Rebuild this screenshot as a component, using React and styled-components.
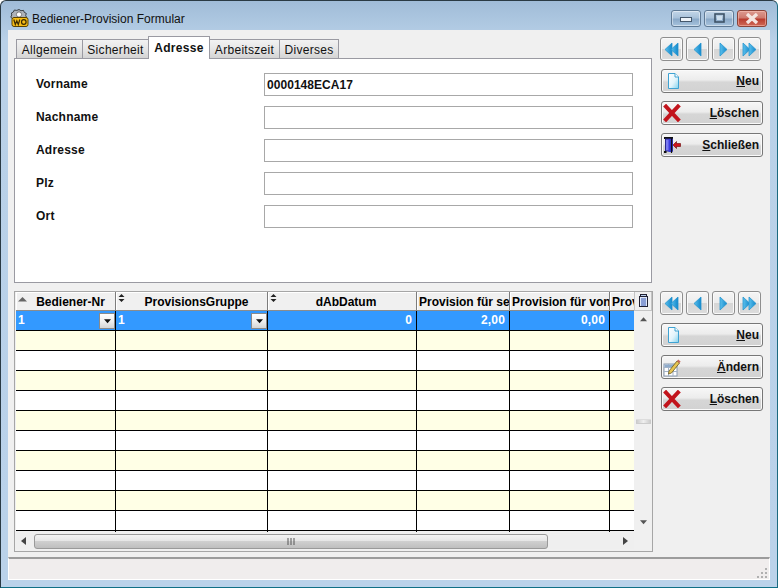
import React from "react";
import styled, { createGlobalStyle } from "styled-components";

const Global = createGlobalStyle`
  html, body { margin: 0; padding: 0; background: #fff; }
  body { width: 778px; height: 588px; overflow: hidden; font-family: "Liberation Sans", Arial, sans-serif; }
  * { box-sizing: border-box; }
`;

const Win = styled.div`
  position: relative;
  width: 778px; height: 588px;
  display: flex; flex-direction: column;
  border: 1px solid #2a3a44;
  border-right-color: #1b6a80;
  border-bottom-color: #0f6f86;
  border-radius: 6px 6px 0 0;
  background: linear-gradient(180deg, #a0bcd8 0, #b9d1e8 40px, #bad2ea 100%);
  padding: 0 7px 7px 7px;
`;
const TitleBar = styled.div`
  height: 29px; flex: none;
  display: flex; align-items: center;
  padding-top: 4px;
`;
const Title = styled.span`
  margin-left: 3px; font-size: 12px; color: #111;
  padding-top: 2px;
`;
const Caption = styled.div`
  margin-left: auto; margin-right: 3px; margin-top: 1px;
  display: flex; gap: 3px;
`;
const CapBtn = styled.div`
  width: ${p => p.$w}px; height: 17px;
  border: 1px solid ${p => p.$red ? "#8a4338" : "#5f7a95"};
  border-radius: 3px;
  display: flex; align-items: center; justify-content: center;
  box-shadow: inset 0 0 0 1px ${p => p.$red ? "rgba(255,200,190,.5)" : "rgba(255,255,255,.45)"};
  background: ${p => p.$red
    ? "linear-gradient(180deg,#dc9a90 0,#cf7a6f 45%,#b93c2f 55%,#cf6a58 100%)"
    : "linear-gradient(180deg,#c3d6e8 0,#a9c2da 45%,#8aa9c8 55%,#a7c3dd 100%)"};
`;
const Client = styled.div`
  flex: 1; min-height: 0;
  display: flex; flex-direction: column;
  background: #f0f0f0;
`;
const Body = styled.div`
  flex: 1; min-height: 0;
  display: flex;
  padding: 8px 0 0 6px;
`;
const LeftCol = styled.div`
  width: 639px; flex: none;
  display: flex; flex-direction: column;
`;
const RightCol = styled.div`
  flex: 1; padding: 0 0 0 7px; margin-top: -1px;
  display: flex; flex-direction: column;
`;
const TabRow = styled.div`
  height: 21px; flex: none;
  display: flex; align-items: flex-end;
  padding-left: 3px;
  position: relative; z-index: 1;
  margin-bottom: -1px;
`;
const Tab = styled.div`
  height: ${p => p.$active ? 23 : 20}px;
  width: ${p => p.$w}px;
  flex: none;
  margin-left: -1px;
  position: relative; z-index: ${p => p.$active ? 1 : 0};
  border: 1px solid #9a9aa2;
  border-bottom: ${p => p.$active ? "0" : "1px solid #9a9aa2"};
  background: ${p => p.$active ? "#fff" : "linear-gradient(180deg,#f2f2f2 0,#e6e6e6 50%,#d4d4d4 100%)"};
  font-size: 12px; letter-spacing: .3px;
  font-weight: ${p => p.$active ? 700 : 400};
  color: #111;
  display: flex; align-items: center; justify-content: center;
  padding-top: ${p => p.$active ? 0 : 1}px;
`;
const TabPanel = styled.div`
  height: 225px; flex: none;
  width: 638px;
  border: 1px solid #9a9aa2;
  background: #fff;
  padding: 14px 18px 0 21px;
  display: flex; flex-direction: column; gap: 10px;
`;
const FormRow = styled.div`
  height: 23px; display: flex; align-items: flex-start;
`;
const Label = styled.label`
  width: 228px; font-size: 12px; font-weight: 700; color: #111; letter-spacing: .2px;
  padding-top: 4px; line-height: 14px;
`;
const Field = styled.div`
  width: 369px; height: 23px;
  border: 1px solid #a8a8a8;
  background: #fff;
  font-size: 12px; font-weight: 700; color: #111; letter-spacing: .05px;
  padding: 4px 0 0 2px; line-height: 14px;
`;
const GridBox = styled.div`
  margin-top: 8px;
  width: 639px; height: 261px; flex: none;
  border: 1px solid #a6a6a6;
  padding: 0 0 2px 1px;
  display: flex; flex-direction: column;
`;
const GridTop = styled.div`
  flex: none; height: 240px; display: flex; position: relative;
`;
const GridTable = styled.div`
  width: 618px; flex: none; overflow: hidden;
`;
const Row = styled.div`
  display: grid;
  grid-template-columns: 100px 152px 149px 93px 100px 60px;
  height: ${p => p.$h}px;
  background: ${p => p.$bg};
  border-bottom: ${p => p.$head ? "0" : "1px solid #000"};
  color: ${p => p.$sel ? "#fff" : "#000"};
`;
const HeadCell = styled.div`
  position: relative;
  background: #f0f0f0;
  border-right: 1px solid #7c7c7c;
  border-bottom: 1px solid #8c8c8c;
  box-shadow: inset 1px 1px 0 #fff;
  font-size: 12px; font-weight: 700;
  white-space: nowrap; overflow: hidden;
  text-align: ${p => p.$left ? "left" : "center"};
  padding-left: ${p => p.$pad}px;
  line-height: 20px;
`;
const SortMark = styled.svg`
  position: absolute; left: 2px; top: ${p => p.$t}px;
`;
const Cell = styled.div`
  position: relative;
  border-right: 1px solid #000;
  margin-bottom: ${p => p.$last ? -2 : 0}px;
  font-size: 12px; font-weight: 700;
  letter-spacing: .15px;
  line-height: 19px;
  text-align: ${p => p.$right ? "right" : "left"};
  padding: ${p => p.$right ? "0 4px 0 0" : "0 0 0 2px"};
`;
const DropBtn = styled.div`
  position: absolute; right: 0; top: 2px;
  width: 16px; height: 16px;
  border: 1px solid #8a8a8a;
  background: linear-gradient(180deg,#fff 0,#f0f0f0 50%,#d5d5d5 100%);
  display: flex; align-items: center; justify-content: center;
`;
const ColPicker = styled.div`
  position: absolute; left: 618px; top: 0; width: 18px; height: 19px;
  background: #f0f0f0; border: 1px solid #c4c4c4; border-top: 0;
  display: flex; align-items: center; justify-content: center;
`;
const VScroll = styled.div`
  width: 18px; flex: none; margin-top: 19px;
  background: #f0f0f0;
  display: flex; flex-direction: column; align-items: center; justify-content: space-between;
  padding: 6px 0 7px;
`;
const VGrip = styled.div`
  width: 15px; height: 5px;
  background: linear-gradient(90deg,#c8c8c8,#efefef 50%,#c8c8c8);
  border-top: 1px solid #ddd; border-bottom: 1px solid #ccc;
`;
const HScroll = styled.div`
  flex: none; height: 16px; margin-top: 1px; width: 618px;
  display: flex; align-items: center;
  background: #efefef;
`;
const Thumb = styled.div`
  width: 514px; height: 15px;
  border: 1px solid #9a9a9a; border-radius: 3px;
  background: linear-gradient(180deg,#f3f3f3 0,#e6e6e6 45%,#cfcfcf 50%,#bfbfbf 100%);
  display: flex; align-items: center; justify-content: center;
`;
const ArrowBox = styled.div`
  width: 18px; flex: none; display: flex; align-items: center; justify-content: center;
  padding-right: ${p => p.$pr}px;
`;
const Spacer = styled.div`flex: 1;`;
const NavRow = styled.div`
  display: flex; gap: 3px; height: 24px; flex: none;
  margin-top: ${p => p.$mt}px;
`;
const NavBtn = styled.div`
  width: 23px; height: 24px;
  border: 1px solid #8e8e8e; border-radius: 3px;
  box-shadow: inset 0 0 0 1px #fafafa;
  background: linear-gradient(180deg,#f5f5f5 0,#ececec 50%,#d6d6d6 52%,#dcdcdc 100%);
  display: flex; align-items: center; justify-content: center;
`;
const ActionBtn = styled.div`
  margin-top: ${p => p.$mt}px; margin-left: 1px;
  width: 102px; height: 24px; flex: none;
  border: 1px solid #777; border-radius: 3px;
  box-shadow: inset 0 0 0 1px #fafafa;
  background: linear-gradient(180deg,#f7f7f7 0,#ececec 45%,#d6d6d6 55%,#d2d2d2 100%);
  display: flex; align-items: center;
  padding: 0 3px 0 1px;
  font-size: 12px; font-weight: 700; color: #111;
`;
const BtnText = styled.span`
  margin-left: auto;
  u { text-decoration: underline; }
`;
const StatusBar = styled.div`
  flex: none; height: 23px; margin-top: 6px; position: relative;
  background: #f0eded;
  border-top: 2px solid #9c9c9c;
  box-shadow: inset 0 -1px 0 #fff;
  border-right: 1px solid #fff; border-left: 1px solid #fff;
`;
const Grip = styled.svg`
  position: absolute; right: 1px; bottom: 1px;
`;

const Doc = () => (
  <svg width="17" height="18" viewBox="0 0 17 18" style={{ marginLeft: 2 }}>
    <defs><linearGradient id="dg" x1="0" y1="0" x2="1" y2="1"><stop offset="0" stopColor="#fff"/><stop offset=".55" stopColor="#e2f4fb"/><stop offset="1" stopColor="#7fd2ee"/></linearGradient></defs>
    <path d="M3.5 1.5H10L13.5 5V16.5H3.5Z" fill="url(#dg)" stroke="#3fa2d2"/>
    <path d="M10 1.5V5H13.5" fill="#fff" stroke="#3fa2d2"/>
  </svg>
);
const Cross = () => (
  <svg width="18" height="18" viewBox="0 0 18 18">
    <path d="M3 2.5L15 15.5M15 2.5L3 15.5" stroke="#c2141c" strokeWidth="4" strokeLinecap="square"/>
  </svg>
);
const Exit = () => (
  <svg width="19" height="18" viewBox="0 0 19 18">
    <rect x="1" y="1" width="9" height="2" fill="#111"/>
    <rect x="2.5" y="3" width="7" height="12" fill="#7a7af0" stroke="#28288c"/>
    <rect x="5.5" y="3" width="4" height="13" fill="#3a3ae0"/>
    <rect x="1" y="15" width="2.5" height="2" fill="#111"/>
    <path d="M8.5 1.5V17" stroke="#111" strokeWidth="1.2"/>
    <path d="M10 9L13.5 5.5V7.5H17.5V10.5H13.5V12.5Z" fill="#d0141c" stroke="#600" strokeWidth=".6"/>
  </svg>
);
const Edit = () => (
  <svg width="18" height="19" viewBox="0 0 18 19">
    <rect x="1" y="6" width="13" height="12" fill="#fff" stroke="#8b9bb0"/>
    <path d="M1 9.5H14M1 13.5H14M5.5 6V18M10 6V18" stroke="#a3b3c8"/>
    <rect x="1.5" y="6.5" width="12" height="2.5" fill="#8faccc"/>
    <path d="M6 13L14 3L16.5 5L8.5 15L5.5 16Z" fill="#e8c552" stroke="#6c5a20" strokeWidth=".8"/>
    <path d="M14 3L15.2 1.6L17.6 3.6L16.5 5Z" fill="#c8675a"/>
  </svg>
);

const NavIcon = ({ dir, dbl }) => {
  const t = dir === "l"
    ? (x) => `M${x + 7} 4V17L${x} 10.5Z`
    : (x) => `M${x} 4V17L${x + 7} 10.5Z`;
  return (
    <svg width="17" height="21" viewBox="0 0 17 21">
      <defs><linearGradient id="na" x1="0" y1="0" x2="1" y2="0"><stop offset="0" stopColor="#5cc0ec"/><stop offset="1" stopColor="#1288cc"/></linearGradient></defs>
      {dbl ? (
        <>
          <path d={t(2)} fill="url(#na)" stroke="#2795cf" strokeWidth=".8"/>
          <path d={t(8)} fill="url(#na)" stroke="#2795cf" strokeWidth=".8"/>
        </>
      ) : <path d={t(5)} fill="url(#na)" stroke="#2795cf" strokeWidth=".8"/>}
    </svg>
  );
};
const Nav = ({ mt }) => (
  <NavRow $mt={mt}>
    <NavBtn><NavIcon dir="l" dbl /></NavBtn>
    <NavBtn><NavIcon dir="l" /></NavBtn>
    <NavBtn><NavIcon dir="r" /></NavBtn>
    <NavBtn><NavIcon dir="r" dbl /></NavBtn>
  </NavRow>
);
const Sort = () => (
  <SortMark $t={2} width="7" height="9" viewBox="0 0 7 9">
    <path d="M3.5 0L6.5 3H.5ZM3.5 8L.5 5H6.5Z" fill="#222"/>
  </SortMark>
);
const Tri = ({ d = "d", w = 7, c = "#555" }) => (
  <svg width={w} height="5" viewBox="0 0 8 5">
    <path d={d === "d" ? "M0 0H8L4 4.5Z" : "M4 0L8 4.5H0Z"} fill={c}/>
  </svg>
);

const fields = [["Vorname", "0000148ECA17"], ["Nachname", ""], ["Adresse", ""], ["Plz", ""], ["Ort", ""]];
const tabs = [["Allgemein", 67], ["Sicherheit", 67], ["Adresse", 62, true], ["Arbeitszeit", 71], ["Diverses", 60]];

export default function App() {
  return (
    <>
      <Global />
      <Win>
        <TitleBar>
          <svg width="20" height="20" viewBox="0 0 20 20" style={{ marginLeft: 1 }}>
            <path d="M10 1.5l2 1.2 2.5-.3.8 2 2 1-.6 2.2 1 2-1.8 1.4H3.6L1.8 9l1-2L2.4 5l2-1 .9-2 2.5.4z" fill="#aeb3ba" stroke="#2f343a" strokeWidth=".9"/>
            <circle cx="10" cy="6.5" r="2.6" fill="#fff" stroke="#555" strokeWidth=".7"/>
            <rect x="3" y="9.5" width="16" height="9" rx="2" fill="#f6bd16" stroke="#5a4300"/>
            <path d="M4.8 11.5l1.5 5 1.5-3.6 1.5 3.6 1.5-5" fill="none" stroke="#3a2a00" strokeWidth="1.2"/>
            <circle cx="14.8" cy="14" r="2.3" fill="none" stroke="#3a2a00" strokeWidth="1.2"/>
          </svg>
          <Title>Bediener-Provision Formular</Title>
          <Caption>
            <CapBtn $w={30}>
              <svg width="14" height="6" viewBox="0 0 14 6" style={{ marginTop: 3 }}><rect x="1.5" y=".5" width="11" height="4" fill="#eef3f8" stroke="#45586c"/></svg>
            </CapBtn>
            <CapBtn $w={30}>
              <svg width="11" height="10" viewBox="0 0 11 10"><rect x="1" y="1" width="9" height="8" fill="none" stroke="#3e5367" strokeWidth="1.6"/><rect x="3" y="3" width="5" height="4" fill="#cfe0ee"/></svg>
            </CapBtn>
            <CapBtn $w={30} $red>
              <svg width="14" height="11" viewBox="0 0 14 11"><path d="M2 1l10 9M12 1L2 10" stroke="#f4e4e0" strokeWidth="3.4"/></svg>
            </CapBtn>
          </Caption>
        </TitleBar>
        <Client>
          <Body>
            <LeftCol>
              <TabRow>
                {tabs.map(([t, w, a]) => <Tab key={t} $w={w} $active={a}>{t}</Tab>)}
              </TabRow>
              <TabPanel>
                {fields.map(([l, v]) => (
                  <FormRow key={l}><Label>{l}</Label><Field>{v}</Field></FormRow>
                ))}
              </TabPanel>
              <GridBox>
                <GridTop>
                  <GridTable>
                    <Row $h={19} $head $bg="#f0f0f0">
                      <HeadCell $pad={10}><SortMark $t={5} width="9" height="5" viewBox="0 0 9 5"><path d="M4.5 0L9 4.5H0Z" fill="#666"/></SortMark>Bediener-Nr</HeadCell>
                      <HeadCell $pad={10}><Sort />ProvisionsGruppe</HeadCell>
                      <HeadCell $pad={8}><Sort />dAbDatum</HeadCell>
                      <HeadCell $left $pad={2}>Provision für se</HeadCell>
                      <HeadCell $left $pad={2}>Provision für von</HeadCell>
                      <HeadCell $left $pad={2}>Prov</HeadCell>
                    </Row>
                    <Row $h={20} $sel $bg="#3399ff">
                      <Cell>1<DropBtn><Tri c="#111" /></DropBtn></Cell>
                      <Cell>1<DropBtn><Tri c="#111" /></DropBtn></Cell>
                      <Cell $right>0</Cell>
                      <Cell $right>2,00</Cell>
                      <Cell $right>0,00</Cell>
                      <Cell />
                    </Row>
                    {Array.from({ length: 10 }).map((_, i) => (
                      <Row key={i} $h={20} $bg={i % 2 === 0 ? "#ffffe6" : "#fff"}>
                        {Array.from({ length: 6 }).map((_, j) => <Cell key={j} $last={i === 9} />)}
                      </Row>
                    ))}
                  </GridTable>
                  <ColPicker>
                    <svg width="11" height="14" viewBox="0 0 11 14">
                      <rect x="2.5" y=".5" width="6" height="2" fill="#bcd0ee" stroke="#223"/>
                      <rect x="1.5" y="2.5" width="8" height="10" fill="#dfe8fa" stroke="#223"/>
                      <path d="M3 5H8M3 7H8M3 9H8M3 11H8" stroke="#3757b0"/>
                    </svg>
                  </ColPicker>
                  <VScroll>
                    <Tri d="u" />
                    <VGrip />
                    <Tri d="d" />
                  </VScroll>
                </GridTop>
                <HScroll>
                  <ArrowBox $pr={3}>
                    <svg width="5" height="8" viewBox="0 0 5 8"><path d="M5 0V8L0 4Z" fill="#444"/></svg>
                  </ArrowBox>
                  <Thumb>
                    <svg width="9" height="7" viewBox="0 0 9 7"><path d="M1 0V7M4 0V7M7 0V7" stroke="#555"/></svg>
                  </Thumb>
                  <Spacer />
                  <ArrowBox $pr={0}>
                    <svg width="5" height="8" viewBox="0 0 5 8"><path d="M0 0V8L5 4Z" fill="#444"/></svg>
                  </ArrowBox>
                </HScroll>
              </GridBox>
            </LeftCol>
            <RightCol>
              <Nav mt={0} />
              <ActionBtn $mt={8}><Doc /><BtnText><u>N</u>eu</BtnText></ActionBtn>
              <ActionBtn $mt={8}><Cross /><BtnText><u>L</u>öschen</BtnText></ActionBtn>
              <ActionBtn $mt={8}><Exit /><BtnText><u>S</u>chließen</BtnText></ActionBtn>
              <Nav mt={134} />
              <ActionBtn $mt={8}><Doc /><BtnText><u>N</u>eu</BtnText></ActionBtn>
              <ActionBtn $mt={8}><Edit /><BtnText><u>Ä</u>ndern</BtnText></ActionBtn>
              <ActionBtn $mt={8}><Cross /><BtnText><u>L</u>öschen</BtnText></ActionBtn>
            </RightCol>
          </Body>
          <StatusBar>
            <Grip width="12" height="12" viewBox="0 0 12 12">
              <path d="M9 1h2v2H9zM5 5h2v2H5zM9 5h2v2H9zM1 9h2v2H1zM5 9h2v2H5zM9 9h2v2H9z" fill="#b0b0b0"/>
            </Grip>
          </StatusBar>
        </Client>
      </Win>
    </>
  );
}
